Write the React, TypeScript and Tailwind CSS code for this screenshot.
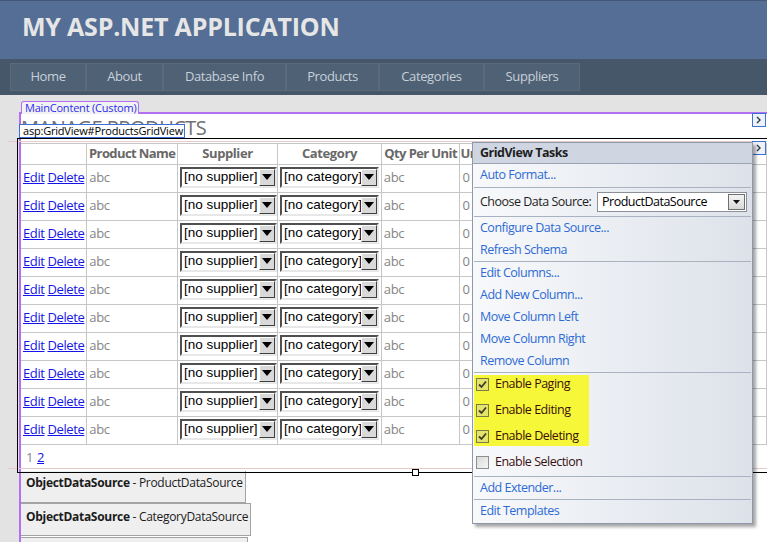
const navItems = [
  { label: "Home", w: "w-[76px]" },
  { label: "About", w: "w-[77px]" },
  { label: "Database Info", w: "w-[123px]" },
  { label: "Products", w: "w-[93px]" },
  { label: "Categories", w: "w-[105px]" },
  { label: "Suppliers", w: "w-[96px]" },
];

const rows = Array.from({ length: 10 }, (_, i) => i);

function DropArrow() {
  return (
    <span className="flex h-full w-[16px] shrink-0 items-center justify-center border border-t-white border-l-white border-r-[#404040] border-b-[#404040] bg-[#d9d9d9]">
      <svg width="10" height="6" viewBox="0 0 10 6">
        <polygon points="0,0 10,0 5,6" fill="#000" />
      </svg>
    </span>
  );
}

function OldSelect({ text, w }: { text: string; w: string }) {
  return (
    <div className={`flex h-[21px] ${w} items-stretch border-2 border-t-[#505050] border-l-[#505050] border-r-[#e8e8e8] border-b-[#e8e8e8] bg-white`}>
      <span className="flex-1 overflow-hidden whitespace-nowrap pl-[2px] font-['Liberation_Sans',Arial,sans-serif] text-[13.5px] leading-[16px] tracking-normal text-black">
        {text}
      </span>
      <DropArrow />
    </div>
  );
}

function Checkbox({ checked }: { checked: boolean }) {
  return checked ? (
    <span className="flex h-[13px] w-[13px] shrink-0 items-center justify-center border border-[#7b7b45] bg-[#e4e46c]">
      <svg width="9" height="9" viewBox="0 0 9 9">
        <polyline points="1,4.5 3.5,7 8,1.5" fill="none" stroke="#3c3c28" strokeWidth="1.8" />
      </svg>
    </span>
  ) : (
    <span className="h-[13px] w-[13px] shrink-0 border border-[#8e8f8f] bg-linear-to-br from-[#d9d9d9] to-[#f6f6f6]" />
  );
}

function SmartTag() {
  return (
    <span className="flex h-[14px] w-[14px] items-center justify-center border border-[#3b72d4] bg-[#eef1f6]">
      <svg width="6" height="8" viewBox="0 0 6 8">
        <polyline points="1,1 4,4 1,7" fill="none" stroke="#2c3a52" strokeWidth="1.4" />
      </svg>
    </span>
  );
}

function TaskLink({ children, h = "h-[22px]" }: { children: string; h?: string }) {
  return <div className={`flex ${h} items-center whitespace-nowrap pl-[7px] text-[#2d6bd4]`}>{children}</div>;
}

function Sep() {
  return <div className="mx-[1px] h-px bg-[#a9b2c1]" />;
}

const cell = "border border-[#c6c6c6] p-0 pl-[2px] whitespace-nowrap overflow-hidden";

export default function App() {
  return (
    <div className="relative h-[542px] w-[767px] overflow-hidden bg-[#e3e3e3] font-['Open_Sans','Noto_Sans',sans-serif] tracking-[-0.4px]">
      <header className="h-[59px] border-t border-[#45587a] bg-[#546e95] pl-[22px]">
        <h1 className="pt-[8px] text-[25px] font-bold leading-[34px] tracking-[-0.2px] text-[#e6e6e6]">
          MY ASP.NET APPLICATION
        </h1>
      </header>

      <nav className="flex h-[36px] bg-[#465769] pl-[10px] pt-[4px]">
        {navItems.map((n) => (
          <div
            key={n.label}
            className={`flex h-[28px] ${n.w} items-center justify-center border border-[#5a6a7c] bg-[#4f6174] text-[13px] text-[#c6d0da]`}
          >
            {n.label}
          </div>
        ))}
      </nav>

      <div className="flex">
        <div className="w-[19px] shrink-0" />
        <div className="flex-1 pt-[17px]">
          <div className="h-[430px] border-l-2 border-t-2 border-[#b470f2] bg-white">
            <div className="h-[29px] whitespace-nowrap pt-px text-[20px] leading-[26px] tracking-[-0.5px] text-[#707070]">
              MANAGE PRODUCTS
            </div>

            <table className="table-fixed border-collapse text-[13px]">
              <colgroup>
                <col className="w-[66px]" />
                <col className="w-[91px]" />
                <col className="w-[100px]" />
                <col className="w-[104px]" />
                <col className="w-[79px]" />
                <col className="w-[80px]" />
                <col className="w-[80px]" />
                <col className="w-[80px]" />
                <col className="w-[80px]" />
              </colgroup>
              <thead>
                <tr className="h-[20px] font-bold text-[#686868]">
                  <th className="border border-l-0 border-[#c6c6c6] p-0" />
                  <th className="overflow-hidden whitespace-nowrap border border-[#c6c6c6] p-0 tracking-[-0.6px]">Product Name</th>
                  <th className="whitespace-nowrap border border-[#c6c6c6] p-0">Supplier</th>
                  <th className="whitespace-nowrap border border-[#c6c6c6] p-0">Category</th>
                  <th className="overflow-hidden whitespace-nowrap border border-[#c6c6c6] p-0 tracking-[-0.6px]">Qty Per Unit</th>
                  <th className="overflow-hidden whitespace-nowrap border border-[#c6c6c6] p-0 text-left">Unit Price</th>
                  <th className="whitespace-nowrap border border-[#c6c6c6] p-0">Units</th>
                  <th className="whitespace-nowrap border border-[#c6c6c6] p-0">Level</th>
                  <th className="whitespace-nowrap border border-[#c6c6c6] p-0">Disc</th>
                </tr>
              </thead>
              <tbody>
                {rows.map((r) => (
                  <tr key={r} className="h-[28px]">
                    <td className={`${cell} border-l-0`}>
                      <a className="text-[#1414e6] underline">Edit</a>{" "}
                      <a className="text-[#1414e6] underline">Delete</a>
                    </td>
                    <td className={`${cell} text-[#858585]`}>abc</td>
                    <td className={`${cell} pb-[2px] pl-[1px]`}>
                      <OldSelect text="[no supplier]" w="w-[97px]" />
                    </td>
                    <td className={`${cell} pb-[2px] pl-[1px]`}>
                      <OldSelect text="[no category]" w="w-[99px]" />
                    </td>
                    <td className={`${cell} text-[#858585]`}>abc</td>
                    <td className={`${cell} text-[#858585]`}>0</td>
                    <td className={`${cell} text-[#858585]`}>0</td>
                    <td className={`${cell} text-[#858585]`}>0</td>
                    <td className={`${cell} text-[#858585]`} />
                  </tr>
                ))}
              </tbody>
            </table>
            <div className="flex h-[26px] items-center gap-[4px] pl-[5px] text-[13px]">
              <span className="text-[#858585]">1</span>
              <a className="text-[#1414e6] underline">2</a>
            </div>

            <div className="flex h-[32px] w-[225px] items-center whitespace-nowrap border-r border-b border-[#a3a3a3] bg-[#efefef] pb-[6px] pl-[5px] text-[12px] tracking-[-0.3px] text-[#1b1b1b]">
              <b>ObjectDataSource</b>&nbsp;- ProductDataSource
            </div>
            <div className="flex h-[33px] w-[230px] items-center whitespace-nowrap border border-l-0 border-[#a3a3a3] bg-[#efefef] pb-[5px] pl-[5px] text-[12px] tracking-[-0.3px] text-[#1b1b1b]">
              <b>ObjectDataSource</b>&nbsp;- CategoryDataSource
            </div>
            <div className="mt-[1px] h-[20px] w-[227px] border border-l-0 border-[#a3a3a3] bg-[#efefef]" />
          </div>
        </div>
      </div>

      {/* designer guides */}
      <div className="pointer-events-none absolute left-[8px] top-[141px] h-px w-[760px] bg-[#e6c9c9]" />
      <div className="pointer-events-none absolute left-[8px] top-[468px] h-px w-[760px] bg-[#e6c9c9]" />

      {/* grid selection outline */}
      <div className="pointer-events-none absolute left-[17px] top-[138px] h-[335px] w-[796px] border border-black" />
      <div className="absolute left-[412px] top-[469px] h-[7px] w-[7px] border border-black bg-white" />

      {/* content tags */}
      <div className="absolute left-[21px] top-[101px] flex h-[13px] w-[118px] items-center whitespace-nowrap rounded-t-[3px] border border-b-0 border-[#b470f2] bg-[#f2f2f2] pl-[3px] text-[11px] tracking-[-0.2px] text-[#2c2cf0]">
        MainContent (Custom)
      </div>
      <div className="absolute left-[19px] top-[124px] flex h-[14px] w-[166px] items-center whitespace-nowrap border border-[#3a6fd6] bg-white pl-[3px] text-[11px] tracking-[-0.2px] text-black">
        asp:GridView#ProductsGridView
      </div>

      <div className="absolute left-[752px] top-[113px]">
        <SmartTag />
      </div>
      <div className="absolute left-[752px] top-[141px]">
        <SmartTag />
      </div>

      {/* tasks panel */}
      <div className="absolute left-[472px] top-[142px] h-[382px] w-[281px] border border-[#8d98ab] bg-linear-to-r from-[#f8f9fb] to-[#dde2ea] text-[12.5px] tracking-[-0.5px] shadow-[3px_3px_3px_rgba(0,0,0,0.35)]">
        <div className="h-[21px] border-b border-[#98a3b6] bg-[#cfd6e1] pl-[7px] font-bold leading-[20px] text-[#1e1e1e]">
          GridView Tasks
        </div>
        <TaskLink h="h-[23px]">Auto Format...</TaskLink>
        <Sep />
        <div className="flex h-[28px] items-center whitespace-nowrap pl-[7px] text-[#1e1e1e]">
          <span className="w-[117px]">Choose Data Source:</span>
          <div className="flex h-[20px] w-[150px] items-center border border-[#8a8f98] bg-white pl-[4px]">
            <span className="flex-1 text-black">ProductDataSource</span>
            <span className="mr-[1px] flex h-[16px] w-[17px] items-center justify-center border border-[#6f6f6f] bg-linear-to-b from-[#f4f4f4] to-[#d8d8d8]">
              <svg width="7" height="4" viewBox="0 0 7 4">
                <polygon points="0,0 7,0 3.5,4" fill="#111" />
              </svg>
            </span>
          </div>
        </div>
        <Sep />
        <TaskLink>Configure Data Source...</TaskLink>
        <TaskLink>Refresh Schema</TaskLink>
        <Sep />
        <TaskLink>Edit Columns...</TaskLink>
        <TaskLink>Add New Column...</TaskLink>
        <TaskLink>Move Column Left</TaskLink>
        <TaskLink>Move Column Right</TaskLink>
        <TaskLink>Remove Column</TaskLink>
        <Sep />
        <div className="ml-[1px] mt-[2px] flex w-[115px] flex-col gap-[8px] whitespace-nowrap bg-[#f7f739] pb-px pl-[2px] text-[#3a1010]">
          {["Enable Paging", "Enable Editing", "Enable Deleting"].map((t) => (
            <div key={t} className="flex h-[18px] items-center gap-[6px]">
              <Checkbox checked />
              <span>{t}</span>
            </div>
          ))}
        </div>
        <div className="mt-[7px] flex h-[18px] items-center gap-[6px] whitespace-nowrap pl-[3px] text-[#3a1010]">
          <Checkbox checked={false} />
          <span>Enable Selection</span>
        </div>
        <div className="mt-[5px]">
          <Sep />
        </div>
        <TaskLink>Add Extender...</TaskLink>
        <Sep />
        <TaskLink>Edit Templates</TaskLink>
      </div>
    </div>
  );
}
